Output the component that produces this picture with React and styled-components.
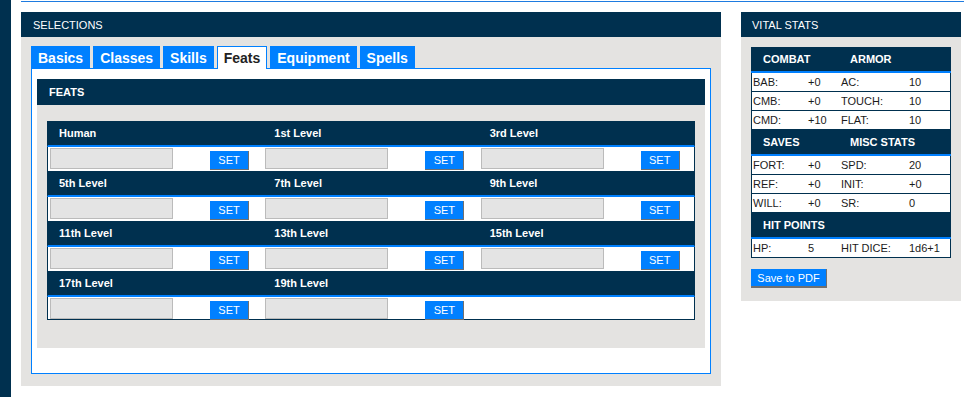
import React from 'react';
import styled, { createGlobalStyle } from 'styled-components';

const NAVY = '#00304f';
const BLUE = '#0080ff';
const GRAY = '#e4e3e1';

const GlobalStyle = createGlobalStyle`
  html, body { margin: 0; padding: 0; background: #fff; }
  body { font-family: "Liberation Sans", Arial, sans-serif; }
  * { box-sizing: border-box; }
`;

const Page = styled.div`
  display: flex;
  min-height: 100vh;
`;

const Stripe = styled.div`
  width: 11px;
  flex-shrink: 0;
  background: ${NAVY};
`;

const Main = styled.div`
  flex: 1;
  padding-left: 10px;
`;

const TopRule = styled.div`
  height: 1px;
  margin-top: 1px;
  background: #1e7be0;
`;

const Columns = styled.div`
  display: flex;
  align-items: flex-start;
  gap: 20px;
  margin-top: 10px;
`;

const Panel = styled.section`
  width: ${p => p.$w}px;
`;

const PanelHeader = styled.div`
  height: 25px;
  display: flex;
  align-items: center;
  padding-left: ${p => p.$pad || 12}px;
  background: ${NAVY};
  color: #fff;
  font-size: 11px;
  text-transform: uppercase;
`;

const PanelBody = styled.div`
  background: ${GRAY};
  padding: ${p => p.$pad};
`;

const Tabs = styled.div`
  display: flex;
  gap: 3px;
  margin-bottom: -1px;
`;

const Tab = styled.div`
  position: relative;
  z-index: 1;
  height: 23px;
  display: flex;
  align-items: center;
  padding: 0 ${p => (p.$active ? 6 : 7)}px;
  background: ${p => (p.$active ? '#fff' : BLUE)};
  color: ${p => (p.$active ? '#222' : '#fff')};
  border: ${p => (p.$active ? `1px solid ${BLUE}` : 'none')};
  border-bottom: none;
  font-size: 14px;
  font-weight: bold;
`;

const TabBox = styled.div`
  border: 1px solid ${BLUE};
  background: #fff;
  padding: 10px 5px 25px;
`;

const SectionHeader = styled.div`
  height: 26px;
  display: flex;
  align-items: center;
  padding-left: 12px;
  background: ${NAVY};
  color: #fff;
  font-size: 11px;
  font-weight: bold;
`;

const SectionBody = styled.div`
  background: ${GRAY};
  padding: 16px 10px 28px;
`;

const HeadRow = styled.div`
  display: grid;
  grid-template-columns: repeat(3, 1fr);
  height: 26px;
  background: ${NAVY};
  border: 1px solid ${NAVY};
  border-top: none;
  border-bottom: 2px solid ${BLUE};
`;

const HeadCell = styled.div`
  display: flex;
  align-items: center;
  padding-left: 11px;
  color: #fff;
  font-size: 11px;
  font-weight: bold;
`;

const InputRow = styled.div`
  display: grid;
  grid-template-columns: repeat(3, 1fr);
  height: ${p => (p.$last ? 23 : 24)}px;
  background: #fff;
  border: 1px solid ${NAVY};
  border-top: none;
  border-bottom: ${p => (p.$last ? `1px solid ${NAVY}` : 'none')};
`;

const InputCell = styled.div`
  display: flex;
  align-items: flex-start;
  padding-left: 2px;
`;

const FeatInput = styled.div`
  width: 123px;
  height: 21px;
  margin-top: 1px;
  background: #e4e4e4;
  border: 1px solid #bbb;
`;

const SetButton = styled.button`
  width: 39px;
  height: 19px;
  margin: 4px 0 0 37px;
  padding: 0;
  background: ${BLUE};
  color: #fff;
  border: none;
  border-right: 1px solid #707070;
  border-bottom: 1px solid #707070;
  font-family: inherit;
  font-size: 11px;
`;

const StatTable = styled.div`
  width: 200px;
`;

const StatHead = styled.div`
  display: grid;
  grid-template-columns: 89px 1fr;
  height: 26px;
  background: ${NAVY};
  border-bottom: 2px solid ${BLUE};
`;

const StatHeadCell = styled.div`
  display: flex;
  align-items: center;
  padding-left: ${p => p.$pad}px;
  color: #fff;
  font-size: 11px;
  font-weight: bold;
`;

const StatRow = styled.div`
  display: grid;
  grid-template-columns: 55px 33px 68px 1fr;
  height: 19px;
  background: #fff;
  border: 1px solid ${NAVY};
  border-top: none;
`;

const StatCell = styled.div`
  display: flex;
  align-items: center;
  padding-left: 1px;
  color: #1b1b1b;
  font-size: 11px;
`;

const PdfButton = styled.button`
  display: block;
  width: 76px;
  height: 19px;
  margin-top: 11px;
  padding: 0;
  background: ${BLUE};
  color: #fff;
  border: none;
  border-right: 1px solid #707070;
  border-bottom: 2px solid #707070;
  font-family: inherit;
  font-size: 11px;
`;

const tabs = ['Basics', 'Classes', 'Skills', 'Feats', 'Equipment', 'Spells'];

const featRows = [
  ['Human', '1st Level', '3rd Level'],
  ['5th Level', '7th Level', '9th Level'],
  ['11th Level', '13th Level', '15th Level'],
  ['17th Level', '19th Level', null],
];

const statGroups = [
  {
    heads: ['Combat', 'Armor'],
    rows: [
      ['BAB:', '+0', 'AC:', '10'],
      ['CMB:', '+0', 'TOUCH:', '10'],
      ['CMD:', '+10', 'FLAT:', '10'],
    ],
  },
  {
    heads: ['Saves', 'Misc Stats'],
    rows: [
      ['FORT:', '+0', 'SPD:', '20'],
      ['REF:', '+0', 'INIT:', '+0'],
      ['WILL:', '+0', 'SR:', '0'],
    ],
  },
  {
    heads: ['Hit Points', ''],
    rows: [['HP:', '5', 'HIT DICE:', '1d6+1']],
  },
];

export default function App() {
  return (
    <Page>
      <GlobalStyle />
      <Stripe />
      <Main>
        <TopRule />
        <Columns>
          <Panel $w={700}>
            <PanelHeader>Selections</PanelHeader>
            <PanelBody $pad="9px 10px 12px">
              <Tabs>
                {tabs.map(t => (
                  <Tab key={t} $active={t === 'Feats'}>{t}</Tab>
                ))}
              </Tabs>
              <TabBox>
                <SectionHeader>FEATS</SectionHeader>
                <SectionBody>
                  {featRows.map((row, i) => (
                    <React.Fragment key={i}>
                      <HeadRow>
                        {row.map((label, j) => (
                          <HeadCell key={j}>{label}</HeadCell>
                        ))}
                      </HeadRow>
                      <InputRow $last={i === featRows.length - 1}>
                        {row.map((label, j) => (
                          <InputCell key={j}>
                            {label && (
                              <>
                                <FeatInput />
                                <SetButton>SET</SetButton>
                              </>
                            )}
                          </InputCell>
                        ))}
                      </InputRow>
                    </React.Fragment>
                  ))}
                </SectionBody>
              </TabBox>
            </PanelBody>
          </Panel>

          <Panel $w={220}>
            <PanelHeader $pad={11}>Vital Stats</PanelHeader>
            <PanelBody $pad="10px 10px 13px">
              <StatTable>
                {statGroups.map((g, i) => (
                  <React.Fragment key={i}>
                    <StatHead>
                      <StatHeadCell $pad={12}>{g.heads[0].toUpperCase()}</StatHeadCell>
                      <StatHeadCell $pad={10}>{g.heads[1].toUpperCase()}</StatHeadCell>
                    </StatHead>
                    {g.rows.map((r, k) => (
                      <StatRow key={k}>
                        {r.map((c, n) => (
                          <StatCell key={n}>{c}</StatCell>
                        ))}
                      </StatRow>
                    ))}
                  </React.Fragment>
                ))}
              </StatTable>
              <PdfButton>Save to PDF</PdfButton>
            </PanelBody>
          </Panel>
        </Columns>
      </Main>
    </Page>
  );
}
